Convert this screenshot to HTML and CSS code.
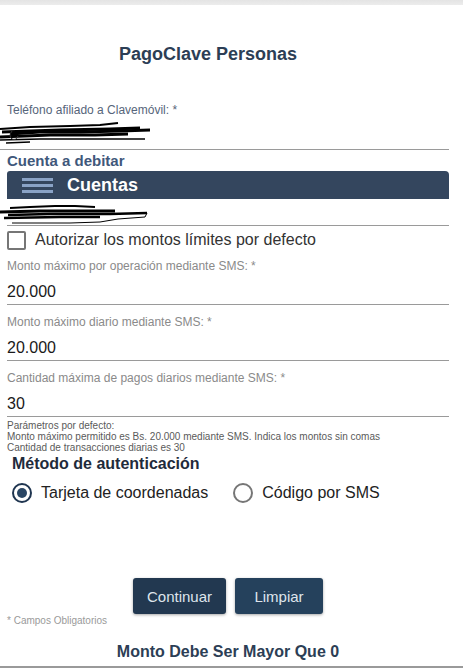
FILE: index.html
```html
<!DOCTYPE html>
<html lang="es">
<head>
<meta charset="utf-8">
<title>PagoClave Personas</title>
<link rel="stylesheet" href="styles.css">
</head>
<body>
<div class="topbar"></div>
<main class="page">
  <h1 class="title">PagoClave Personas</h1>

  <div class="phone">
    <div class="label label-dark">Teléfono afiliado a Clavemóvil: *</div>
    <div class="input input-full">
      <svg class="scribble" width="155" height="26" viewBox="0 0 155 26">
        <path d="M0 9 L30 7 L70 6 L100 5 L118 3" stroke="#000" stroke-width="2" fill="none"/>
        <path d="M2 12 L60 10 L110 9 L140 8" stroke="#000" stroke-width="3" fill="none"/>
        <path d="M10 14 L40 12 L80 12 L120 11 L150 10" stroke="#000" stroke-width="3" fill="none"/>
        <path d="M0 17 L50 15 L95 15 L128 14" stroke="#000" stroke-width="3" fill="none"/>
        <path d="M0 20 L40 19 L90 19 L145 19" stroke="#000" stroke-width="1.5" fill="none"/>
        <path d="M6 23 L30 22" stroke="#000" stroke-width="1.5" fill="none"/>
        <path d="M12 11 Q8 16 12 19 Q16 21 18 16" stroke="#333" stroke-width="1" fill="none"/>
      </svg>
    </div>
  </div>

  <div class="section-title">Cuenta a debitar</div>
  <div class="accounts-bar">
    <span class="hamburger"><i></i><i></i><i></i></span>
    <span class="accounts-text">Cuentas</span>
  </div>
  <div class="input input-account">
    <svg class="scribble" width="150" height="22" viewBox="0 0 150 22">
      <path d="M10 5 L30 4 L55 3 L75 3 L95 4" stroke="#000" stroke-width="2" fill="none"/>
      <path d="M0 9 L40 8 L80 8 L115 8" stroke="#000" stroke-width="3" fill="none"/>
      <path d="M8 12 L50 11 L90 11 L110 11 L147 10" stroke="#000" stroke-width="2.5" fill="none"/>
      <path d="M4 15 L60 14 L100 14" stroke="#000" stroke-width="2.5" fill="none"/>
      <path d="M147 10 L145 14 L118 16 L100 19 L70 20 L12 20" stroke="#000" stroke-width="1" fill="none"/>
    </svg>
  </div>

  <label class="check-row">
    <span class="checkbox"></span>
    <span class="check-text">Autorizar los montos límites por defecto</span>
  </label>

  <div class="field">
    <div class="label">Monto máximo por operación mediante SMS: *</div>
    <div class="input value">20.000</div>
  </div>
  <div class="field">
    <div class="label">Monto máximo diario mediante SMS: *</div>
    <div class="input value">20.000</div>
  </div>
  <div class="field">
    <div class="label">Cantidad máxima de pagos diarios mediante SMS: *</div>
    <div class="input value">30</div>
  </div>

  <div class="hint">
    <div>Parámetros por defecto:</div>
    <div>Monto máximo permitido es Bs. 20.000 mediante SMS. Indica los montos sin comas</div>
    <div>Cantidad de transacciones diarias es 30</div>
  </div>

  <div class="auth-title">Método de autenticación</div>
  <div class="radios">
    <label class="radio-item"><span class="radio checked"></span><span class="radio-text">Tarjeta de coordenadas</span></label>
    <label class="radio-item"><span class="radio"></span><span class="radio-text">Código por SMS</span></label>
  </div>

  <div class="actions">
    <button class="btn btn-primary">Continuar</button>
    <button class="btn btn-secondary">Limpiar</button>
  </div>
  <div class="required">* Campos Obligatorios</div>

  <div class="message">Monto Debe Ser Mayor Que 0</div>
</main>
<div class="bottom-line"></div>
</body>
</html>
```

FILE: styles.css
```css
* { box-sizing: border-box; }
html, body { margin: 0; padding: 0; background: #fff; }
body {
  font-family: "Liberation Sans", Arial, sans-serif;
  color: #222;
  width: 463px;
  height: 668px;
  overflow: hidden;
  position: relative;
}
.topbar {
  height: 5px;
  background: linear-gradient(#e4e4e4, #ececec);
}
.page {
  padding: 0 14px 0 7px;
}
.title {
  margin: 38px 0 0 0;
  padding-right: 40px;
  text-align: center;
  font-size: 18px;
  line-height: 22px;
  font-weight: bold;
  color: #2c3e55;
}
.phone { margin-top: 38px; margin-left: -7px; }
.phone .label { padding-left: 7px; }
.label {
  font-size: 12px;
  line-height: 14px;
  color: #8a8a8a;
}
.label-dark { color: #56657a; }
.input {
  border-bottom: 1px solid #9a9a9a;
}
.input-full {
  height: 33px;
  padding-top: 3px;
}
.scribble { display: block; }
.section-title {
  margin-top: 1px;
  font-size: 15px;
  line-height: 20px;
  font-weight: bold;
  color: #3f587b;
}
.accounts-bar {
  height: 28px;
  background: #34465e;
  border-radius: 3px 4px 0 0;
  display: flex;
  align-items: center;
  padding-left: 15px;
}
.hamburger {
  display: flex;
  flex-direction: column;
  gap: 3px;
  width: 31px;
  margin-right: 14px;
}
.hamburger i {
  display: block;
  height: 3px;
  background: #8aa3c6;
}
.accounts-text {
  color: #fff;
  font-weight: bold;
  font-size: 18px;
}
.input-account {
  height: 27px;
  margin-left: -7px;
  padding-top: 4px;
  border-bottom: none;
  position: relative;
}
.input-account::after {
  content: "";
  position: absolute;
  left: 7px;
  right: 0;
  bottom: 0;
  border-bottom: 1px solid #9a9a9a;
}
.check-row {
  display: flex;
  align-items: center;
  margin-top: 5px;
  height: 18px;
}
.checkbox {
  width: 19px;
  height: 19px;
  border: 2px solid #767676;
  border-radius: 2px;
  margin-right: 9px;
  flex: none;
}
.check-text {
  font-size: 16px;
  color: #333;
}
.field { margin-top: 10px; }
.value {
  height: 32px;
  padding-top: 7px;
  font-size: 16px;
  line-height: 24px;
  color: #1a1a1a;
}
.hint {
  margin-top: 3px;
  font-size: 10px;
  line-height: 11px;
  color: #5a5a5a;
}
.auth-title {
  margin-top: 1px;
  padding-left: 5px;
  font-size: 16px;
  line-height: 19px;
  font-weight: bold;
  color: #1f2b3b;
}
.radios {
  display: flex;
  gap: 25px;
  margin-top: 9px;
  padding-left: 5px;
  height: 22px;
  align-items: center;
}
.radio-item {
  display: flex;
  align-items: center;
}
.radio {
  width: 20px;
  height: 20px;
  border: 2px solid #767676;
  border-radius: 50%;
  margin-right: 9px;
  position: relative;
  flex: none;
}
.radio.checked {
  border-color: #1f3550;
}
.radio.checked::after {
  content: "";
  position: absolute;
  left: 3px;
  top: 3px;
  width: 10px;
  height: 10px;
  border-radius: 50%;
  background: #2a4664;
}
.radio-text {
  font-size: 16px;
  color: #222;
}
.actions {
  margin-top: 74px;
  display: flex;
  justify-content: center;
  gap: 9px;
}
.btn {
  height: 36px;
  border: none;
  border-radius: 3px;
  font-family: "Liberation Sans", Arial, sans-serif;
  font-size: 15px;
  color: #dfe5ec;
  box-shadow: 0 1px 3px rgba(0,0,0,0.35);
  padding: 0;
}
.btn-primary { width: 93px; background: #223850; }
.btn-secondary { width: 88px; background: #25415c; }
.required {
  margin-top: 1px;
  font-size: 10px;
  line-height: 12px;
  color: #9a9a9a;
}
.message {
  margin-top: 15px;
  text-align: center;
  font-size: 16px;
  line-height: 20px;
  font-weight: bold;
  color: #2c3e55;
}
.bottom-line {
  position: absolute;
  left: 0;
  right: 0;
  top: 666px;
  border-top: 2px solid #9a9a9a;
}
```
